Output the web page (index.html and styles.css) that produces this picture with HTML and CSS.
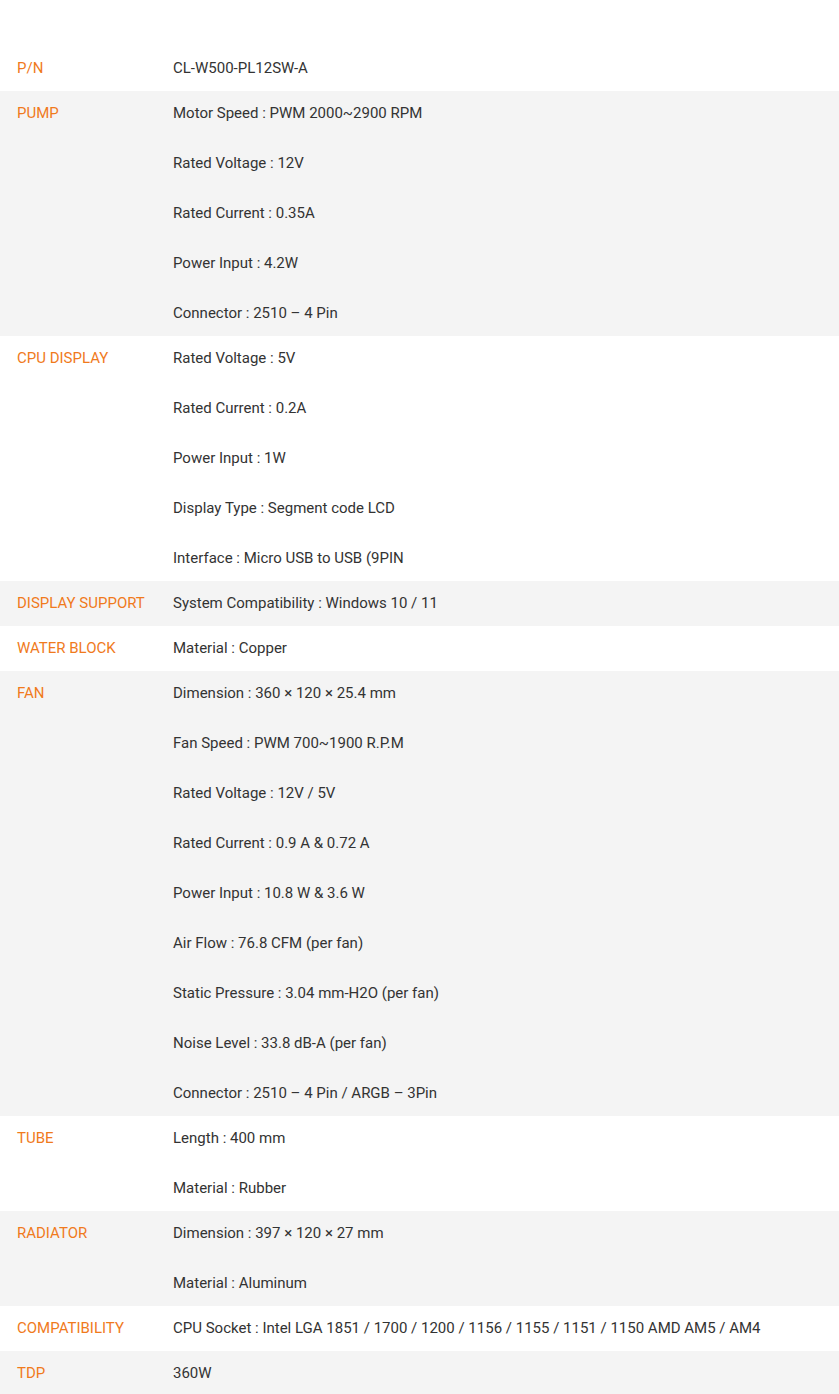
FILE: index.html
```html
<!DOCTYPE html>
<html>
<head>
<meta charset="utf-8">
<link rel="stylesheet" href="styles.css">
</head>
<body>
<div class="specs">
  <div class="row"><div class="label">P/N</div><div class="vals"><span>CL-W500-PL12SW-A</span></div></div>
  <div class="row alt"><div class="label">PUMP</div><div class="vals">
    <span>Motor Speed : PWM 2000~2900 RPM</span>
    <span>Rated Voltage : 12V</span>
    <span>Rated Current : 0.35A</span>
    <span>Power Input : 4.2W</span>
    <span>Connector : 2510 – 4 Pin</span>
  </div></div>
  <div class="row"><div class="label">CPU DISPLAY</div><div class="vals">
    <span>Rated Voltage : 5V</span>
    <span>Rated Current : 0.2A</span>
    <span>Power Input : 1W</span>
    <span>Display Type : Segment code LCD</span>
    <span>Interface : Micro USB to USB (9PIN</span>
  </div></div>
  <div class="row alt"><div class="label">DISPLAY SUPPORT</div><div class="vals"><span>System Compatibility : Windows 10 / 11</span></div></div>
  <div class="row"><div class="label">WATER BLOCK</div><div class="vals"><span>Material : Copper</span></div></div>
  <div class="row alt"><div class="label">FAN</div><div class="vals">
    <span>Dimension : 360 × 120 × 25.4 mm</span>
    <span>Fan Speed : PWM 700~1900 R.P.M</span>
    <span>Rated Voltage : 12V / 5V</span>
    <span>Rated Current : 0.9 A &amp; 0.72 A</span>
    <span>Power Input : 10.8 W &amp; 3.6 W</span>
    <span>Air Flow : 76.8 CFM (per fan)</span>
    <span>Static Pressure : 3.04 mm-H2O (per fan)</span>
    <span>Noise Level : 33.8 dB-A (per fan)</span>
    <span>Connector : 2510 – 4 Pin / ARGB – 3Pin</span>
  </div></div>
  <div class="row"><div class="label">TUBE</div><div class="vals">
    <span>Length : 400 mm</span>
    <span>Material : Rubber</span>
  </div></div>
  <div class="row alt"><div class="label">RADIATOR</div><div class="vals">
    <span>Dimension : 397 × 120 × 27 mm</span>
    <span>Material : Aluminum</span>
  </div></div>
  <div class="row"><div class="label">COMPATIBILITY</div><div class="vals"><span>CPU Socket : Intel LGA 1851 / 1700 / 1200 / 1156 / 1155 / 1151 / 1150 AMD AM5 / AM4</span></div></div>
  <div class="row alt"><div class="label">TDP</div><div class="vals"><span>360W</span></div></div>
</div>
</body>
</html>
```

FILE: styles.css
```css
html, body {
  margin: 0;
  padding: 0;
  background: #ffffff;
}
body {
  font-family: Roboto, "Liberation Sans", sans-serif;
  font-size: 15px;
  color: #333333;
}
.specs {
  padding-top: 46px;
  display: flex;
  flex-direction: column;
}
.row {
  display: flex;
  padding: 10px 0 10px 17px;
  line-height: 25px;
}
.row.alt {
  background: #f4f4f4;
}
.label {
  width: 156px;
  flex: none;
  color: #f07a1c;
}
.vals {
  display: flex;
  flex-direction: column;
  gap: 25px;
}
```
